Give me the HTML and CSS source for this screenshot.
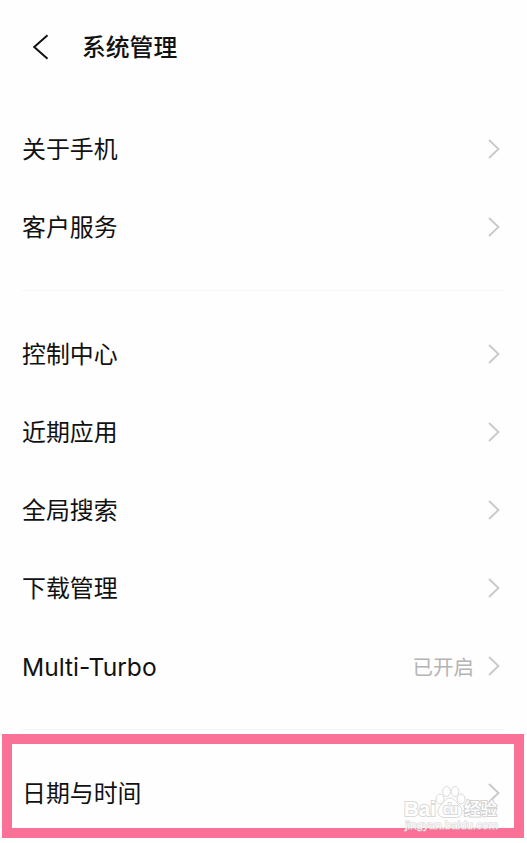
FILE: index.html
```html
<!DOCTYPE html>
<html lang="zh-CN">
<head>
<meta charset="utf-8">
<title>系统管理</title>
<link rel="stylesheet" href="styles.css">
</head>
<body>
<div class="page">
  <div class="header">
    <svg class="back" width="16" height="26" viewBox="0 0 16 26"><path d="M14.5 1.2L1.2 13L14.5 24.8"/></svg>
    <h1>系统管理</h1>
  </div>

  <div class="group">
    <div class="row"><span>关于手机</span><svg class="arrow" width="12" height="20" viewBox="0 0 12 20"><path d="M1 1L10.5 10L1 19"/></svg></div>
    <div class="row"><span>客户服务</span><svg class="arrow" width="12" height="20" viewBox="0 0 12 20"><path d="M1 1L10.5 10L1 19"/></svg></div>
  </div>

  <div class="group">
    <div class="row"><span>控制中心</span><svg class="arrow" width="12" height="20" viewBox="0 0 12 20"><path d="M1 1L10.5 10L1 19"/></svg></div>
    <div class="row"><span>近期应用</span><svg class="arrow" width="12" height="20" viewBox="0 0 12 20"><path d="M1 1L10.5 10L1 19"/></svg></div>
    <div class="row"><span>全局搜索</span><svg class="arrow" width="12" height="20" viewBox="0 0 12 20"><path d="M1 1L10.5 10L1 19"/></svg></div>
    <div class="row"><span>下载管理</span><svg class="arrow" width="12" height="20" viewBox="0 0 12 20"><path d="M1 1L10.5 10L1 19"/></svg></div>
    <div class="row"><span class="latin">Multi-Turbo</span><span class="state">已开启</span><svg class="arrow" width="12" height="20" viewBox="0 0 12 20"><path d="M1 1L10.5 10L1 19"/></svg></div>
  </div>

  <div class="group">
    <div class="row"><span>日期与时间</span><svg class="arrow" width="12" height="20" viewBox="0 0 12 20"><path d="M1 1L10.5 10L1 19"/></svg></div>
  </div>

  <div class="frame"></div>

  <svg class="mark" width="100" height="50" viewBox="0 0 100 50">
    <g class="paw">
      <ellipse cx="40" cy="17" rx="4" ry="5"/>
      <ellipse cx="46.5" cy="9.5" rx="3.8" ry="5"/>
      <ellipse cx="55" cy="9.5" rx="3.8" ry="5"/>
      <ellipse cx="61" cy="17" rx="4" ry="5"/>
      <path d="M50 16C46 16 44 20 41 23C36 28 37 35 44 35.500C48 35.500 52 35.500 56 35.500C63 35 64 28 59 23C56 20 54 16 50 16Z"/>
    </g>
    <text class="brand" x="4" y="34" textLength="32" lengthAdjust="spacingAndGlyphs">Bai</text>
    <text class="du" x="43" y="32" textLength="15">du</text>
    <text class="cn" x="64" y="33" textLength="33">经验</text>
    <text class="url" x="5" y="47" textLength="93">jingyan.baidu.com</text>
  </svg>
</div>
</body>
</html>
```
FILE: styles.css
```css
body {
	margin: 0;
	background: #fefefe;
	font-family: "Noto Sans CJK SC", sans-serif;
	color: #111;
}
.page {
	position: relative;
	width: 527px;
	height: 843px;
	overflow: hidden;
}
.header {
	display: flex;
	align-items: center;
	height: 94px;
	padding-left: 33px;
	margin-bottom: 16px;
}
.header h1 {
	margin: 0 0 2px 33px;
	font-size: 23.8px;
	font-weight: 500;
	line-height: 36px;
}
.back path {
	fill: none;
	stroke: #111;
	stroke-width: 2;
}
.group {
	margin: 0 23px 0 22px;
}
.group + .group {
	border-top: 1px solid #f6f6f6;
	margin-top: 24px;
	padding-top: 24px;
}
.row {
	display: flex;
	align-items: center;
	height: 78px;
	font-size: 23.9px;
	line-height: 36px;
}
.row span {
	padding-bottom: 2px;
}
.arrow {
	margin-left: auto;
	margin-right: 4px;
}
.arrow path {
	fill: none;
	stroke: #c8c8c8;
	stroke-width: 1.8;
}
.row .latin {
	padding: 1px 0 0;
	font-family: Inter, sans-serif;
	font-size: 24.6px;
}
.row .state {
	margin-left: auto;
	padding: 0;
	font-size: 20.5px;
	color: #b4b4b4;
}
.state + .arrow {
	margin-left: 14px;
}
.frame {
	position: absolute;
	left: 2px;
	top: 734px;
	width: 502px;
	height: 84px;
	border: 10px solid #f97197;
}
/* watermark over the last row */
.mark {
	position: absolute;
	left: 400px;
	top: 782px;
	fill: #fff;
	stroke: #dadada;
	stroke-width: 1;
	font-family: "Liberation Sans", "Noto Sans CJK SC", sans-serif;
}
.mark text {
	paint-order: stroke;
	stroke-width: 2;
}
.brand {
	font-size: 21px;
	font-weight: bold;
}
.du {
	font-size: 14px;
	font-weight: bold;
}
.cn {
	font-size: 16.5px;
	font-weight: 500;
	stroke: #d2d2d2;
}
.mark .url {
	font-size: 11.5px;
	stroke: #ccc;
	stroke-opacity: .6;
	stroke-width: 1.4;
	fill-opacity: .8;
}
```
